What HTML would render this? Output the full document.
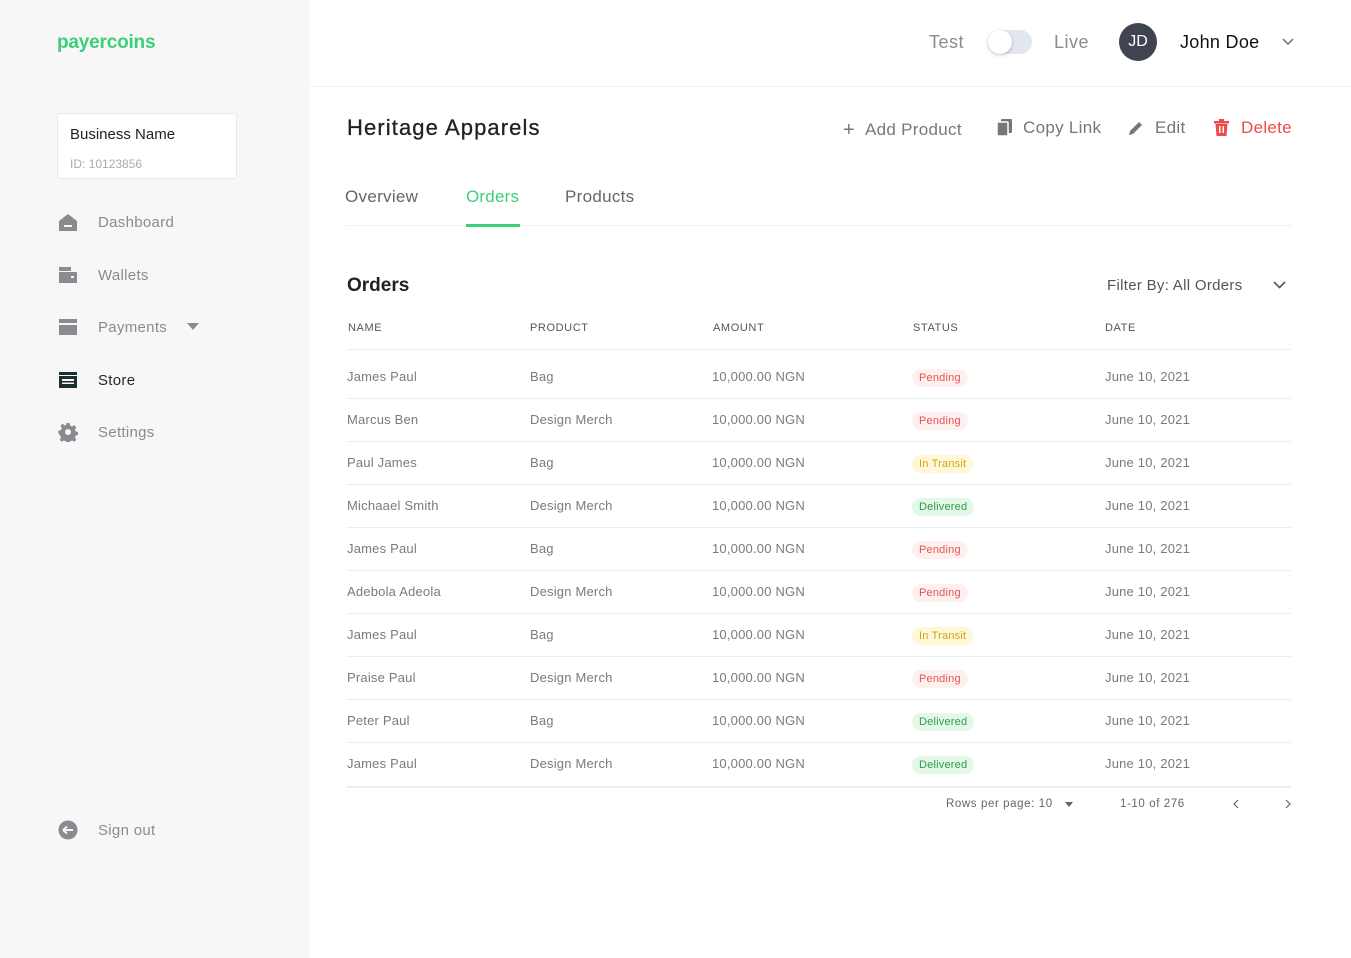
<!DOCTYPE html>
<html><head><meta charset="utf-8"><style>
*{margin:0;padding:0;box-sizing:border-box}
body{width:1351px;height:958px;position:relative;font-family:"Liberation Sans",sans-serif;background:#fff;overflow:hidden;color:#333}
.a{position:absolute;white-space:nowrap}
#side{position:absolute;left:0;top:0;width:310px;height:958px;background:#f7f7f7}
.nav{position:absolute;left:58px;font-size:15px;color:#8a8a90;display:flex;align-items:center;letter-spacing:.3px}
.nav .ic{width:20px;height:20px;margin-right:20px;display:flex;align-items:center;justify-content:center}
.cell{position:absolute;font-size:13px;color:#7a7a80;letter-spacing:.2px}
.hd{position:absolute;top:322px;font-size:11px;color:#555;letter-spacing:.6px}
.row{position:absolute;left:347px;width:944px;height:43px;border-bottom:1px solid #ececf4}
.badge{display:inline-block;padding:3px 7px;border-radius:10px;font-size:11px}
.p{background:#fff0f0;color:#e05555}.t{background:#fff8d6;color:#d4a21a}.d{background:#e3f8e8;color:#2f9b47}
.row .b{top:13px}
</style></head><body>
<div id="side">
 <div class="a" style="left:57px;top:32px;font-size:19px;font-weight:bold;color:#3ccf7a;letter-spacing:-.2px">payercoins</div>
 <div class="a" style="left:57px;top:113px;width:180px;height:66px;background:#fff;border:1px solid #e6e8ee;border-radius:3px">
  <div class="a" style="left:12px;top:12px;font-size:15px;color:#222">Business Name</div>
  <div class="a" style="left:12px;top:43px;font-size:12px;color:#aaa">ID: 10123856</div>
 </div>
 <div class="nav" style="top:212px"><span class="ic"><svg width="20" height="18"><path d="M10 1L1 8v10h18V8z" fill="#8a8a90"/><rect x="6" y="12" width="8" height="2" fill="#f7f7f7"/></svg></span>Dashboard</div>
 <div class="nav" style="top:265px"><span class="ic"><svg width="20" height="18"><rect x="1" y="1" width="12" height="4" fill="#8a8a90"/><rect x="1" y="6" width="18" height="11" fill="#8a8a90"/><rect x="13" y="10" width="3" height="2" fill="#f7f7f7"/></svg></span>Wallets</div>
 <div class="nav" style="top:317px"><span class="ic"><svg width="20" height="18"><rect x="1" y="1" width="18" height="4" fill="#8a8a90"/><rect x="1" y="7" width="18" height="10" fill="#8a8a90"/></svg></span>Payments<svg style="margin-left:20px" width="12" height="8"><path d="M0 0h12L6 7z" fill="#8a8a90"/></svg></div>
 <div class="nav" style="top:370px;color:#1d2a2a"><span class="ic"><svg width="20" height="18"><rect x="1" y="1" width="18" height="3" fill="#1d3030"/><rect x="1" y="5" width="18" height="12" fill="#1d3030"/><rect x="4" y="8" width="12" height="5" fill="#f7f7f7"/><rect x="4" y="10" width="12" height="1.5" fill="#1d3030"/></svg></span>Store</div>
 <div class="nav" style="top:422px"><span class="ic"><svg width="20" height="20" viewBox="0 0 20 20"><path d="M8.5 1h3l.5 2.5 2 1 2.3-1.3 2 2-1.3 2.3.8 2 2.5.5v3l-2.5.5-.8 2 1.3 2.3-2 2-2.3-1.3-2 .8-.5 2.5h-3l-.5-2.5-2-.8-2.3 1.3-2-2 1.3-2.3-.8-2L.5 11.5v-3l2.5-.5.8-2-1.3-2.3 2-2L6.8 3.5l1.2-.5z" fill="#8a8a90"/><circle cx="10" cy="10" r="3" fill="#f7f7f7"/></svg></span>Settings</div>
 <div class="nav" style="top:820px"><span class="ic"><svg width="20" height="20"><circle cx="10" cy="10" r="9.5" fill="#8a8a90"/><path d="M5 10h10M5 10l4-3.5M5 10l4 3.5" stroke="#f7f7f7" stroke-width="2" fill="none"/></svg></span>Sign out</div>
</div>

<div class="a" style="left:310px;top:86px;width:1041px;height:1px;background:#f0f0f4"></div>
<div class="a" style="left:929px;top:32px;font-size:18px;color:#8a8a90;letter-spacing:.5px">Test</div>
<div class="a" style="left:988px;top:30px;width:44px;height:24px;border-radius:12px;background:#e2e6ef"></div>
<div class="a" style="left:988px;top:30px;width:24px;height:24px;border-radius:12px;background:#fff;box-shadow:0 1px 3px rgba(0,0,0,.25)"></div>
<div class="a" style="left:1054px;top:32px;font-size:18px;color:#8a8a90;letter-spacing:.5px">Live</div>
<div class="a" style="left:1119px;top:23px;width:38px;height:38px;border-radius:50%;background:#3f4450;color:#fff;font-size:16px;text-align:center;line-height:38px">JD</div>
<div class="a" style="left:1180px;top:32px;font-size:18px;color:#111;letter-spacing:.3px">John Doe</div>
<svg class="a" style="left:1282px;top:38px" width="12" height="8"><path d="M1 1l5 5 5-5" stroke="#666" stroke-width="1.4" fill="none"/></svg>

<div class="a" style="left:347px;top:115px;font-size:22px;color:#222;letter-spacing:1.1px;-webkit-text-stroke:.3px #222">Heritage Apparels</div>
<div class="a" style="left:843px;top:118px;font-size:17px;color:#777;letter-spacing:.3px"><span style="font-size:20px;margin-right:10px;position:relative;top:1px">+</span>Add Product</div>
<svg class="a" style="left:997px;top:119px" width="16" height="18"><rect x="4" y="0" width="11" height="14" fill="#777" rx="1"/><rect x="0" y="3" width="11" height="14" fill="#777" stroke="#fff" stroke-width="1.5" rx="1"/></svg>
<div class="a" style="left:1023px;top:118px;font-size:17px;color:#777;letter-spacing:.3px">Copy Link</div>
<svg class="a" style="left:1128px;top:120px" width="16" height="16"><path d="M1 15l1-4 9-9 3 3-9 9z" fill="#777"/></svg>
<div class="a" style="left:1155px;top:118px;font-size:17px;color:#777;letter-spacing:.3px">Edit</div>
<svg class="a" style="left:1214px;top:119px" width="15" height="17"><rect x="0" y="2" width="15" height="2.5" fill="#ef4a4a"/><rect x="5" y="0" width="5" height="3" fill="#ef4a4a"/><path d="M1.5 5h12l-1 12h-10z" fill="#ef4a4a"/><rect x="5" y="7" width="1.5" height="7" fill="#fff"/><rect x="8.5" y="7" width="1.5" height="7" fill="#fff"/></svg>
<div class="a" style="left:1241px;top:118px;font-size:17px;color:#ef4a4a;letter-spacing:.3px">Delete</div>

<div class="a" style="left:345px;top:187px;font-size:17px;color:#666;letter-spacing:.3px">Overview</div>
<div class="a" style="left:466px;top:187px;font-size:17px;color:#3ccf7a;letter-spacing:.2px">Orders</div>
<div class="a" style="left:565px;top:187px;font-size:17px;color:#666;letter-spacing:.3px">Products</div>
<div class="a" style="left:345px;top:225px;width:946px;height:1px;background:#f0f0f2"></div>
<div class="a" style="left:466px;top:224px;width:54px;height:3px;background:#3ccf7a"></div>

<div class="a" style="left:347px;top:275px;font-size:19px;color:#222;font-weight:bold">Orders</div>
<div class="a" style="left:1107px;top:277px;font-size:15px;color:#555;letter-spacing:.3px">Filter By: All Orders</div>
<svg class="a" style="left:1273px;top:281px" width="13" height="8"><path d="M1 1l5.5 5.5L12 1" stroke="#555" stroke-width="1.6" fill="none"/></svg>

<div class="hd" style="left:348px">NAME</div>
<div class="hd" style="left:530px">PRODUCT</div>
<div class="hd" style="left:713px">AMOUNT</div>
<div class="hd" style="left:913px">STATUS</div>
<div class="hd" style="left:1105px">DATE</div>
<div class="a" style="left:347px;top:349px;width:944px;height:1px;background:#ececf4"></div>

<div class="row" style="top:356px"><span class="cell" style="left:0;top:13px">James Paul</span><span class="cell" style="left:183px;top:13px">Bag</span><span class="cell" style="left:365px;top:13px">10,000.00 NGN</span><span class="cell b" style="left:565px"><span class="badge p">Pending</span></span><span class="cell" style="left:758px;top:13px">June 10, 2021</span></div>
<div class="row" style="top:399px"><span class="cell" style="left:0;top:13px">Marcus Ben</span><span class="cell" style="left:183px;top:13px">Design Merch</span><span class="cell" style="left:365px;top:13px">10,000.00 NGN</span><span class="cell b" style="left:565px"><span class="badge p">Pending</span></span><span class="cell" style="left:758px;top:13px">June 10, 2021</span></div>
<div class="row" style="top:442px"><span class="cell" style="left:0;top:13px">Paul James</span><span class="cell" style="left:183px;top:13px">Bag</span><span class="cell" style="left:365px;top:13px">10,000.00 NGN</span><span class="cell b" style="left:565px"><span class="badge t">In Transit</span></span><span class="cell" style="left:758px;top:13px">June 10, 2021</span></div>
<div class="row" style="top:485px"><span class="cell" style="left:0;top:13px">Michaael Smith</span><span class="cell" style="left:183px;top:13px">Design Merch</span><span class="cell" style="left:365px;top:13px">10,000.00 NGN</span><span class="cell b" style="left:565px"><span class="badge d">Delivered</span></span><span class="cell" style="left:758px;top:13px">June 10, 2021</span></div>
<div class="row" style="top:528px"><span class="cell" style="left:0;top:13px">James Paul</span><span class="cell" style="left:183px;top:13px">Bag</span><span class="cell" style="left:365px;top:13px">10,000.00 NGN</span><span class="cell b" style="left:565px"><span class="badge p">Pending</span></span><span class="cell" style="left:758px;top:13px">June 10, 2021</span></div>
<div class="row" style="top:571px"><span class="cell" style="left:0;top:13px">Adebola Adeola</span><span class="cell" style="left:183px;top:13px">Design Merch</span><span class="cell" style="left:365px;top:13px">10,000.00 NGN</span><span class="cell b" style="left:565px"><span class="badge p">Pending</span></span><span class="cell" style="left:758px;top:13px">June 10, 2021</span></div>
<div class="row" style="top:614px"><span class="cell" style="left:0;top:13px">James Paul</span><span class="cell" style="left:183px;top:13px">Bag</span><span class="cell" style="left:365px;top:13px">10,000.00 NGN</span><span class="cell b" style="left:565px"><span class="badge t">In Transit</span></span><span class="cell" style="left:758px;top:13px">June 10, 2021</span></div>
<div class="row" style="top:657px"><span class="cell" style="left:0;top:13px">Praise Paul</span><span class="cell" style="left:183px;top:13px">Design Merch</span><span class="cell" style="left:365px;top:13px">10,000.00 NGN</span><span class="cell b" style="left:565px"><span class="badge p">Pending</span></span><span class="cell" style="left:758px;top:13px">June 10, 2021</span></div>
<div class="row" style="top:700px"><span class="cell" style="left:0;top:13px">Peter Paul</span><span class="cell" style="left:183px;top:13px">Bag</span><span class="cell" style="left:365px;top:13px">10,000.00 NGN</span><span class="cell b" style="left:565px"><span class="badge d">Delivered</span></span><span class="cell" style="left:758px;top:13px">June 10, 2021</span></div>
<div class="row" style="top:743px;height:45px;border-bottom:2px solid #ececf4"><span class="cell" style="left:0;top:13px">James Paul</span><span class="cell" style="left:183px;top:13px">Design Merch</span><span class="cell" style="left:365px;top:13px">10,000.00 NGN</span><span class="cell b" style="left:565px"><span class="badge d">Delivered</span></span><span class="cell" style="left:758px;top:13px">June 10, 2021</span></div>

<div class="a" style="left:946px;top:798px;font-size:11.5px;color:#666;letter-spacing:.6px">Rows per page: 10</div>
<svg class="a" style="left:1065px;top:802px" width="8" height="5"><path d="M0 0h8L4 5z" fill="#666"/></svg>
<div class="a" style="left:1120px;top:798px;font-size:11.5px;color:#666;letter-spacing:.6px">1-10 of 276</div>
<svg class="a" style="left:1233px;top:799px" width="6" height="10"><path d="M5 1L1 5l4 4" stroke="#666" stroke-width="1.2" fill="none"/></svg>
<svg class="a" style="left:1285px;top:799px" width="6" height="10"><path d="M1 1l4 4-4 4" stroke="#666" stroke-width="1.2" fill="none"/></svg>
</body></html>
